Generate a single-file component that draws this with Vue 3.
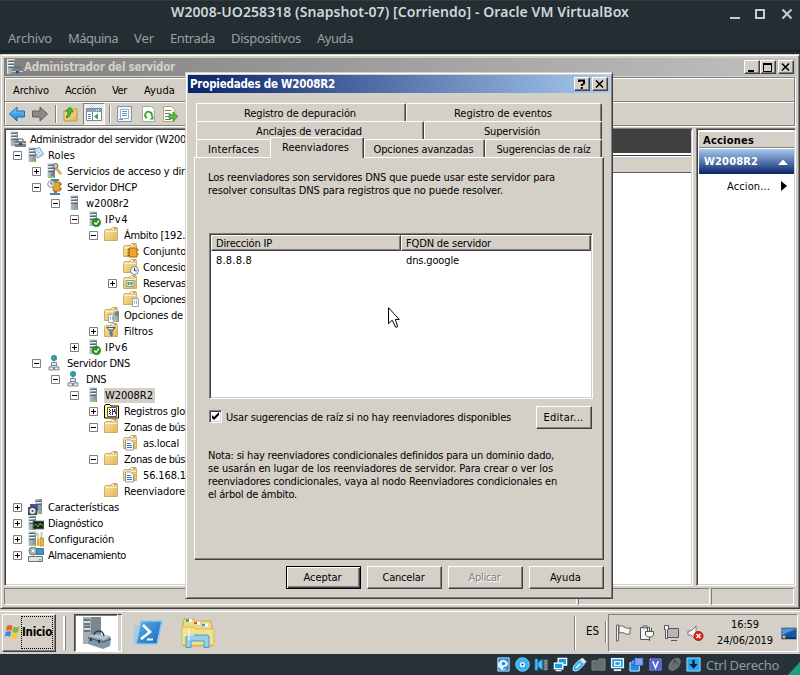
<script setup>
const vFit = {
  mounted(el, { value }) {
    if (!value) return
    const natural = el.getBoundingClientRect().width
    const count = el.textContent.length
    el.style.letterSpacing = (value - natural) / count + 'px'
  },
}

const hostMenu = [
  ['Archivo', 44], ['Máquina', 50], ['Ver', 20], ['Entrada', 45], ['Dispositivos', 70], ['Ayuda', 36],
]
const guestMenu = [['Archivo', 36], ['Acción', 31], ['Ver', 15], ['Ayuda', 31]]

const tree = [
  { l: -1, t: 'Administrador del servidor (W200', w: 156, i: ['serverl', 'case'] },
  { l: 0, e: '-', t: 'Roles', w: 27, i: ['serverl', 'pages'] },
  { l: 1, e: '+', t: 'Servicios de acceso y dir', w: 118, i: ['serverl', 'keys'] },
  { l: 1, e: '-', t: 'Servidor DHCP', w: 70, i: ['dhcp'] },
  { l: 2, e: '-', t: 'w2008r2', w: 43, i: ['server'] },
  { l: 3, e: '-', t: 'IPv4', w: 23, i: ['server', 'check'] },
  { l: 4, e: '-', t: 'Ámbito [192.', w: 61, i: ['folder'] },
  { l: 5, t: 'Conjunto', w: 43, i: ['folder', 'book'] },
  { l: 5, t: 'Concesio', w: 43, i: ['folder', 'clock'] },
  { l: 5, e: '+', t: 'Reservas', w: 43, i: ['folder', 'card'] },
  { l: 5, t: 'Opciones', w: 43, i: ['folder', 'sheet'] },
  { l: 4, t: 'Opciones de', w: 59, i: ['folder', 'serveropts'] },
  { l: 4, e: '+', t: 'Filtros', w: 29, i: ['folder', 'funnel'] },
  { l: 3, e: '+', t: 'IPv6', w: 23, i: ['server', 'check'] },
  { l: 1, e: '-', t: 'Servidor DNS', w: 63, i: ['dns'] },
  { l: 2, e: '-', t: 'DNS', w: 20, i: ['dns'] },
  { l: 3, e: '-', t: 'W2008R2', w: 48, i: ['server'], sel: true },
  { l: 4, e: '+', t: 'Registros glo', w: 61, i: ['log'] },
  { l: 4, e: '-', t: 'Zonas de bús', w: 61, i: ['folder'] },
  { l: 5, t: 'as.local', w: 36, i: ['folder', 'doc'] },
  { l: 4, e: '-', t: 'Zonas de bús', w: 61, i: ['folder'] },
  { l: 5, t: '56.168.1', w: 43, i: ['folder', 'doc'] },
  { l: 4, t: 'Reenviadore', w: 61, i: ['folder'] },
  { l: 0, e: '+', t: 'Características', w: 71, i: ['tower', 'disk'] },
  { l: 0, e: '+', t: 'Diagnóstico', w: 55, i: ['serverl', 'scope'] },
  { l: 0, e: '+', t: 'Configuración', w: 66, i: ['serverl', 'tools'] },
  { l: 0, e: '+', t: 'Almacenamiento', w: 78, i: ['storage'] },
]

const intro = [
  ['Los reenviadores son servidores DNS que puede usar este servidor para', 347],
  ['resolver consultas DNS para registros que no puede resolver.', 295],
]
const note = [
  ['Nota: si hay reenviadores condicionales definidos para un dominio dado,', 346],
  ['se usarán en lugar de los reenviadores de servidor. Para crear o ver los', 345],
  ['reenviadores condicionales, vaya al nodo Reenviadores condicionales en', 349],
  ['el árbol de ámbito.', 89],
]
const buttons = [
  { t: 'Aceptar', w: 38, k: 'default' },
  { t: 'Cancelar', w: 42, k: '' },
  { t: 'Aplicar', w: 32, k: 'disabled' },
  { t: 'Ayuda', w: 31, k: '' },
]
const hostIcons = ['hdd', 'cd', 'audio', 'net', 'usb', 'shared', 'display', 'record', 'cpu', 'mouse', 'kbd']
</script>

<template>
  <div class="screen">
    <svg class="defs" width="0" height="0">
      <defs>
        <linearGradient id="gfold" x1="0" y1="0" x2="1" y2="1"><stop offset="0" stop-color="#fbe6a4" /><stop offset="1" stop-color="#e2b458" /></linearGradient>
        <linearGradient id="gsrv" x1="0" y1="0" x2="1" y2="0"><stop offset="0" stop-color="#bcc6cc" /><stop offset="1" stop-color="#7f8c94" /></linearGradient>
        <linearGradient id="gblue" x1="0" y1="0" x2="0" y2="1"><stop offset="0" stop-color="#7fd0fa" /><stop offset="1" stop-color="#1583d2" /></linearGradient>
        <linearGradient id="gps" x1="0" y1="0" x2="1" y2="1"><stop offset="0" stop-color="#55b5ea" /><stop offset="1" stop-color="#1c63bb" /></linearGradient>
      </defs>
      <symbol id="i-server" viewBox="0 0 16 16">
        <path d="M4 0h8v15H4z" fill="url(#gsrv)" /><path d="M4 .5h8M4.500 0v15" stroke="#dfe6ea" fill="none" />
        <path d="M5 2.500h6M5 5.500h6M5 8.500h6" stroke="#5d6b74" /><path d="M5 3.500h6M5 6.500h6" stroke="#eef2f4" />
        <path d="M9 13h2v2H9z" fill="#62e42c" />
      </symbol>
      <symbol id="i-serverl" viewBox="0 0 16 16">
        <path d="M0 0h8v15H0z" fill="url(#gsrv)" /><path d="M0 .5h8M.5 0v15" stroke="#dfe6ea" fill="none" />
        <path d="M1 2.500h6M1 5.500h6M1 8.500h6" stroke="#5d6b74" /><path d="M1 3.500h6M1 6.500h6" stroke="#eef2f4" />
        <path d="M5 13h2v2H5z" fill="#62e42c" />
      </symbol>
      <symbol id="i-tower" viewBox="0 0 16 16">
        <path d="M7 0h7v15H7z" fill="url(#gsrv)" /><path d="M7.500 2.500h6M7.500 5.500h6" stroke="#52616a" /><path d="M7.500 3.500h6" stroke="#eef2f4" /><path d="M11 12h2v2h-2z" fill="#62e42c" />
      </symbol>
      <symbol id="i-case" viewBox="0 0 16 16">
        <path d="M5 10h11v6H5z" fill="#74838e" /><path d="M8 10V8h5v2" fill="none" stroke="#53606a" /><path d="M5 12.500h11" stroke="#c3ccd2" /><path d="M9 12h3v2H9z" fill="#3b4750" />
      </symbol>
      <symbol id="i-pages" viewBox="0 0 16 16">
        <path d="M6.500 2.500l5-2 4 7-6 3.500z" fill="#e9f3fb" stroke="#5f8fbb" stroke-width=".9" /><path d="M8.500 4.500l3-1.500M9.500 6.500l3-1.500M10.500 8.500l3-1.500" stroke="#7fa8cc" stroke-width=".8" />
      </symbol>
      <symbol id="i-keys" viewBox="0 0 16 16">
        <circle cx="8.500" cy="3" r="2.400" fill="#c8c8c8" stroke="#666" /><path d="M8 5l-3 8" stroke="#777" stroke-width="2" /><path d="M9 5l5 6" stroke="#c98d1c" stroke-width="2.400" /><path d="M9.500 5.500l4 5" stroke="#f6d16a" />
      </symbol>
      <symbol id="i-dhcp" viewBox="0 0 16 16">
        <path d="M4 0h8v2H4zM3 14h10v2H3z" fill="#4f7fa8" /><path d="M7 1h3v14H7z" fill="#657f92" />
        <path d="M6 3h7v9H6z" fill="#eda42b" stroke="#9c6412" stroke-width=".8" /><path d="M13 4h1.500v2H13zM13 9h1.500v2H13z" fill="#b3541a" />
        <circle cx="4" cy="5" r="3.300" fill="#eef4f8" stroke="#8a979f" /><path d="M4 3v2h2" fill="none" stroke="#334" stroke-width=".8" />
      </symbol>
      <symbol id="i-check" viewBox="0 0 16 16">
        <circle cx="11.500" cy="11.500" r="4.200" fill="#2c9a22" stroke="#16640f" stroke-width=".6" /><path d="M9.300 11.500l1.700 1.800 3-3.600" stroke="#fff" stroke-width="1.300" fill="none" />
      </symbol>
      <symbol id="i-folder" viewBox="0 0 16 16">
        <path d="M.5 3.500L1.500 2.500H7V1.500l1-1h5l.5 2v11H.5z" fill="url(#gfold)" stroke="#cda75a" stroke-width=".9" /><path d="M8 1.500h4" stroke="#fff" /><path d="M1 4.500h12" stroke="#fff6d0" stroke-width=".8" /><path d="M10 1h2v1h-2z" fill="#5ba3dc" />
      </symbol>
      <symbol id="i-book" viewBox="0 0 16 16">
        <path d="M6 5h8v9H6z" fill="#f0a42c" stroke="#a36612" /><path d="M4.500 7h2M4.500 10h2M4.500 12.500h2" stroke="#744a0e" /><path d="M14.500 6h1v2h-1z" fill="#cf4a22" /><path d="M14.500 10h1v2h-1z" fill="#4a9a38" />
      </symbol>
      <symbol id="i-clock" viewBox="0 0 16 16">
        <circle cx="11.500" cy="11.500" r="4" fill="#eef4f8" stroke="#7d8a94" /><path d="M11.500 9v2.700h2.300" fill="none" stroke="#33414d" />
      </symbol>
      <symbol id="i-card" viewBox="0 0 16 16"><path d="M3 5.500h8v6H3z" fill="#dcecf0" stroke="#7b8a8f" stroke-width=".8" /><path d="M4.500 7h2v3h-2zM7.500 7h2v3h-2z" fill="#4a9c54" /></symbol>
      <symbol id="i-sheet" viewBox="0 0 16 16"><path d="M9.500 7.500h6v8h-6z" fill="#fff" stroke="#8391a3" stroke-width=".8" /><path d="M11 10h1M13 10h1M11 12h1M13 12h1" stroke="#3d6fb0" /></symbol>
      <symbol id="i-serveropts" viewBox="0 0 16 16"><path d="M10 4h5v11h-5z" fill="url(#gsrv)" /><path d="M10.500 6h4M10.500 8h4" stroke="#56636c" /><path d="M12 12h2v2h-2z" fill="#62e42c" /><path d="M4.500 7.500h5v8h-5z" fill="#fff" stroke="#8391a3" stroke-width=".8" /><path d="M6 10h1M8 10h1M6 12h1M8 12h1" stroke="#3d6fb0" /></symbol>
      <symbol id="i-funnel" viewBox="0 0 16 16"><path d="M2.500 4.500h9L8 8v5L6 11.500V8z" fill="#79a0b8" stroke="#3e5a6c" stroke-width=".9" /><path d="M4 5.500h5" stroke="#d8edf8" /></symbol>
      <symbol id="i-dns" viewBox="0 0 16 16">
        <circle cx="7" cy="3" r="3" fill="#2b87cf" /><path d="M5 1l3 1-1 2-2 1zM8 4l1.500-1L9 5z" fill="#46b54b" />
        <path d="M7 6v5M4 12V10.500h6V12" stroke="#8c979e" fill="none" /><path d="M4.500 7.500h5v3h-5zM2 12h4.500v3H2zM7.500 12H12v3H7.500z" fill="#e2e7ea" stroke="#74818a" stroke-width=".9" />
      </symbol>
      <symbol id="i-log" viewBox="0 0 16 16"><path d="M.5 3l1-1.500h4L7 3h7.500v12H.5z" fill="#ffff78" stroke="#000" /><path d="M3.500 4.500h9v9h-9z" fill="#fff" stroke="#555" /><path d="M5 6h1v1H5zM6 7h1v1H6zM5 8h1v1H5zM6 9h1v1H6zM5 10h1v1H5zM6 11h1v1H6z" fill="#111" /><path d="M8.500 6v6M9 8.500h2.500V11" stroke="#2333b8" fill="none" /><path d="M10 6h1.500v2H10z" fill="#d22" /></symbol>
      <symbol id="i-doc" viewBox="0 0 16 16"><path d="M2.500 5h5l3 2.500V15h-8z" fill="#fff" stroke="#76899d" stroke-width=".8" /><path d="M4 8.500h4M4 10.500h5M4 12.500h5" stroke="#2e79c4" /></symbol>
      <symbol id="i-disk" viewBox="0 0 16 16"><path d="M2 5h8v7H2z" fill="#4a4f9c" /><path d="M0 8h9v8H0z" fill="#444f57" /><circle cx="4.500" cy="12" r="3" fill="#e5e9ec" /><circle cx="4.500" cy="12" r="1" fill="#444" /></symbol>
      <symbol id="i-scope" viewBox="0 0 16 16"><path d="M5 6h11v8H5z" fill="#1c2320" stroke="#6d7880" stroke-width=".8" /><path d="M6 11l2-2 2 3 2-4 1 2h2" stroke="#5edc3f" fill="none" stroke-width=".8" /></symbol>
      <symbol id="i-tools" viewBox="0 0 16 16"><path d="M7 1l3 3v11" stroke="#e4a62b" stroke-width="2.200" fill="none" /><path d="M7 .5l3 3v5" stroke="#c9d0d4" stroke-width="2" fill="none" /><path d="M13.500 1v7" stroke="#bfc8cd" stroke-width="2" /><path d="M12 7h3.500v8H12z" fill="#f0b32f" stroke="#a87310" stroke-width=".6" /></symbol>
      <symbol id="i-storage" viewBox="0 0 16 16"><circle cx="5" cy="4" r="4" fill="#a9b4bb" stroke="#69757d" /><circle cx="5" cy="4" r="1.200" fill="#fff" /><path d="M8.500 1.500h7v6h-7z" fill="#2d9be0" stroke="#596a75" /><path d="M.5 9.500h14v5H.5z" fill="#dfe4e7" stroke="#68747c" /><path d="M11 12h2v1.500h-2z" fill="#3fcf2f" /></symbol>

      <symbol id="h-hdd" viewBox="0 0 16 16"><path d="M2 1h12v14H2z" fill="#1583d6" stroke="#d9efff" /><path d="M11 12a5 5 0 1 1 1-6q1 4-3 4l-4 4" fill="#d8f2ff" stroke="#e8f8ff" /><circle cx="8" cy="7" r="1.800" fill="#1583d6" /></symbol>
      <symbol id="h-cd" viewBox="0 0 16 16"><circle cx="8" cy="8" r="7.200" fill="#34b6f4" stroke="#7fd8ff" /><circle cx="8" cy="8" r="2.800" fill="#e9f8ff" /><circle cx="8" cy="8" r="1" fill="#116" /></symbol>
      <symbol id="h-audio" viewBox="0 0 16 16"><path d="M1 2h3v12H1zM4 6l5-4v12L4 10z" fill="#4cbcf7" stroke="#1173b8" stroke-width=".7" /><path d="M10 3h5v11h-5z" fill="#56646c" /><path d="M12.500 3v11" stroke="#8d999f" stroke-width="3" stroke-dasharray="2 1" /></symbol>
      <symbol id="h-net" viewBox="0 0 16 16"><path d="M5.500 1.500h9v7h-9z" fill="#169bf0" stroke="#fff" stroke-width="1.400" /><path d="M1.500 6.500h9v6h-9z" fill="#169bf0" stroke="#fff" stroke-width="1.400" /><path d="M3 14.500h6" stroke="#e3eef5" stroke-width="1.500" /></symbol>
      <symbol id="h-usb" viewBox="0 0 16 16"><path d="M11 1l4 4-2 2-4-4z" fill="#d2eefe" stroke="#eef" /><path d="M8 3l5 5-6 6q-4 2-6 0 0-4 2-6z" fill="#41aef0" stroke="#c5eaff" /><path d="M4 12l5-5" stroke="#eaf8ff" stroke-width="1.500" /></symbol>
      <symbol id="h-shared" viewBox="0 0 16 16"><path d="M1 4h6l1.500-2H15v12H1z" fill="#686d6f" stroke="#7b8081" /></symbol>
      <symbol id="h-display" viewBox="0 0 16 16"><path d="M1 1h14v11H1z" fill="#e9f8ff" /><path d="M2.500 2.500h11v8h-11z" fill="#1795e7" /><path d="M5 5h6v4H5z" fill="none" stroke="#fff" stroke-width="1.300" /><path d="M4 14h8" stroke="#eaf6fc" stroke-width="2" /></symbol>
      <symbol id="h-record" viewBox="0 0 16 16"><path d="M1 6h10v9H1z" fill="#1792ea" stroke="#dcefff" /><path d="M6 1h9v8H6zM3 3l3 1v3L3 8z" fill="#7ea6f1" stroke="#264fae" stroke-width=".7" /></symbol>
      <symbol id="h-cpu" viewBox="0 0 16 16"><path d="M2 2h12v12H2z" fill="#3e51c5" stroke="#8c98ff" stroke-width="2" stroke-dasharray="1 1" /><path d="M3 3h10v10H3z" fill="#4e63d5" /><path d="M5 4.500l3 7 3-7" fill="none" stroke="#fff" stroke-width="1.700" /></symbol>
      <symbol id="h-mouse" viewBox="0 0 16 16"><path d="M2 12q0-7 6-10 5-2 6 2 0 6-5 9-5 3-7-1z" fill="#696e70" stroke="#7e8385" /><path d="M7 3l5 5M9 2l-2 5" stroke="#3a4145" /></symbol>
      <symbol id="h-kbd" viewBox="0 0 16 16"><path d="M1 1h14v14H1z" fill="#28a6f0" stroke="#a9e0ff" /><path d="M8 3v7" stroke="#07243a" stroke-width="2.600" /><path d="M3.500 7.500h9L8 12.500z" fill="#07243a" /></symbol>
    </svg>

    <header class="host-title">
      <span class="host-name" v-fit="458">W2008-UO258318 (Snapshot-07) [Corriendo] - Oracle VM VirtualBox</span>
      <svg class="host-ctl" width="70" height="16" viewBox="0 0 70 16">
        <path d="M2 12h10v2H2z" fill="#c5cdd0" /><path d="M28 5h8v8h-8z" fill="none" stroke="#c5cdd0" stroke-width="2" /><path d="M54.500 4.500l9 9M63.500 4.500l-9 9" stroke="#c5cdd0" stroke-width="2" />
      </svg>
    </header>
    <nav class="host-menu"><span v-for="m in hostMenu" :key="m[0]" class="t" v-fit="m[1]">{{ m[0] }}</span></nav>

    <section class="manager">
      <div class="m-title">
        <svg class="m-icon" width="16" height="16"><use href="#i-serverl" width="16" height="16" /><use href="#i-case" width="16" height="16" /></svg>
        <b class="t" v-fit="151">Administrador del servidor</b>
        <div class="winbtns">
          <i class="wb"><svg width="12" height="10"><path d="M2 8h6v2H2z" /></svg></i>
          <i class="wb"><svg width="12" height="10"><path d="M1.500 1.500h8v8h-8z" fill="none" stroke="#000" /><path d="M1 1h9v2H1z" /></svg></i>
          <i class="wb gap"><svg width="12" height="10"><path d="M2 1.500l7 7M9 1.500l-7 7" stroke="#000" stroke-width="1.600" /></svg></i>
        </div>
      </div>
      <div class="m-bars">
        <div class="m-menu"><span v-for="m in guestMenu" :key="m[0]" class="t" v-fit="m[1]">{{ m[0] }}</span></div>
        <div class="m-tools">
          <svg class="back" width="16" height="16"><path d="M.5 8L8 1v4h7.500v6H8v4z" fill="url(#gblue)" stroke="#1c6cae" /></svg>
          <svg class="fwd" width="16" height="16"><path d="M15.500 8L8 1v4H.5v6H8v4z" fill="#8b8b8b" stroke="#5f5f5f" /></svg>
          <i class="sep" />
          <svg class="up" width="16" height="16"><path d="M1 5h6l1-2h6v12H1z" fill="url(#gfold)" stroke="#c19a45" /><path d="M4 12q4-2 4-6h2.500L7 1 2.500 5H5q0 4-2 6z" fill="#52b52e" stroke="#287a16" stroke-width=".7" /></svg>
          <div class="pressed"><svg width="16" height="16"><path d="M.5 2.500h15v12H.5z" fill="#fff" stroke="#7b8794" /><path d="M1 3h14v3H1z" fill="#8ba0b8" /><path d="M10 4h1M12 4h1" stroke="#fff" /><path d="M6.500 6v8" stroke="#7b8794" /><path d="M2 8.500h3M2 10.500h3M2 12.500h3" stroke="#4b90ca" /><path d="M12 7.500v6l-4-3z" fill="#39a52a" /></svg></div>
          <i class="sep s2" />
          <svg class="props" width="16" height="16"><path d="M.5.5h14v15H.5z" fill="#edf4fa" stroke="#8794a3" /><path d="M3.500 3.500h8v9h-8z" fill="#fff" stroke="#9fb1c3" /><path d="M5 5.500h5M5 7.500h5M5 9.500h5M2 13.500h4" stroke="#5797cd" /></svg>
          <svg class="refresh" width="16" height="16"><path d="M.5.500h9l3 3v12H.5z" fill="#fff" stroke="#a8a8a8" /><path d="M5 12a3.300 3.300 0 1 1 4.500-1.500" fill="none" stroke="#35a32a" stroke-width="1.800" /><path d="M11.500 9.500v4H7.500z" fill="#35a32a" /></svg>
          <svg class="export" width="18" height="16"><path d="M1.500.5h8l3 3v12h-11z" fill="#fffdf0" stroke="#b5a76f" /><path d="M3 4.500h6M3 7.500h5M3 10.500h5M3 13.500h6" stroke="#6b7a86" /><path d="M7 8.500h4V6l5 4.500-5 4.500v-2.500H7z" fill="#58bd3b" stroke="#2f8a1c" stroke-width=".7" /></svg>
        </div>
      </div>
      <div class="panes">
        <div class="tree sunk">
          <div v-for="(r, n) in tree" :key="n" class="node" :class="'lv' + (r.l + 1)">
            <span class="exp"><svg v-if="r.e" width="9" height="9"><path d="M.5.500h8v8h-8z" fill="#fff" stroke="#808080" /><path :d="r.e === '+' ? 'M2 4.500h5M4.500 2v5' : 'M2 4.500h5'" stroke="#000" /></svg></span>
            <svg class="ico" width="16" height="16"><use v-for="s in r.i" :key="s" :href="'#i-' + s" width="16" height="16" /></svg>
            <span class="label" :class="{ sel: r.sel }"><span class="t" v-fit="r.w">{{ r.t }}</span></span>
          </div>
        </div>
        <div class="center sunk"><div class="c-head" /><div class="c-cols" /></div>
        <div class="actions sunk">
          <div class="a-head"><b class="t" v-fit="51">Acciones</b></div>
          <div class="a-group"><b class="t" v-fit="54">W2008R2</b><svg width="10" height="6"><path d="M0 6l5-5.500L10 6z" fill="#fff" /></svg></div>
          <div class="a-item"><span class="t" v-fit="43">Accion...</span><svg width="6" height="10"><path d="M0 0l6 5-6 5z" /></svg></div>
        </div>
      </div>
      <div class="status"><i class="st1" /><i class="st2" /><i class="st3" /></div>
    </section>

    <footer class="taskbar">
      <div class="start">
        <svg width="17" height="16" viewBox="0 0 17 16"><path d="M3 2q3-2 5.500 0L7.500 7q-3-2-5.500 0z" fill="#e8622c" /><path d="M9.500 2.500q3 2 6 0L14 8q-3 2-5.500 0z" fill="#7fbb2e" /><path d="M1.800 8q3-2 5.500 0L6 13q-3-2-5.500 0z" fill="#3f8fd8" /><path d="M8.200 9q3 2 5.600 0l-1.300 5q-3 2-5.600 0z" fill="#f8ca32" /></svg>
        <span class="dotted"><b class="t" v-fit="30">Inicio</b></span>
      </div>
      <i class="tsep a" />
      <div class="task-on">
        <svg width="32" height="32" viewBox="0 0 32 32"><path d="M2 0h8v27H2z" fill="#a4afb4" /><path d="M10 0h10v27H10z" fill="#7b878d" /><path d="M3 3h6M3 7h6M3 10h6M3 14h6" stroke="#54636c" stroke-width="1.500" /><path d="M3 5h6M3 12h6" stroke="#e2e8ea" stroke-width="1.500" /><path d="M7 19l5-2 17 2 1 3-1 7-7 3-15-5z" fill="#7e95a5" /><path d="M7 19l6-2 17 2-7 4z" fill="#b2c3ce" /><path d="M13 18q1-4 5-4t5 5" fill="none" stroke="#35424b" stroke-width="1.500" /><path d="M7 21l15 4 8-3" fill="none" stroke="#455762" /><path d="M10 21v3M18 23v3" stroke="#2d3940" stroke-width="2" /></svg>
      </div>
      <i class="edge" />
      <svg class="ps" width="32" height="26" viewBox="0 0 32 26"><path d="M1 5h6L3 23H0z" fill="#8ccbed" opacity=".6" /><path d="M8 1h21L24 24H3z" fill="url(#gps)" stroke="#8ac9ee" stroke-width="1.500" stroke-linejoin="round" /><path d="M10 5l7 7-9 7" fill="none" stroke="#fff" stroke-width="2.600" /><path d="M14 19.500h6" stroke="#fff" stroke-width="2" /></svg>
      <svg class="ex" width="34" height="32" viewBox="0 0 34 32"><path d="M2 5l1-4h10l2 2h15l1 5v20H2z" fill="#eed886" stroke="#c8a648" /><path d="M5 2.500h6M13 5h6M21 7h6" stroke="#fff" stroke-width="3" /><path d="M5 2.500h3" stroke="#20a83a" stroke-width="2.500" /><path d="M13 5h3" stroke="#e4522c" stroke-width="2.500" /><path d="M21 7h3" stroke="#3a9be0" stroke-width="2.500" /><path d="M1 9h11l2 2h19v16H1z" fill="#f3e08f" stroke="#d8bc5c" /><path d="M5 29.500V19q0-2 2-2h19q2 0 2 2v10.500h-5V23H10v6.500z" fill="#95cfea" stroke="#4c9cc6" /><path d="M8 12v10M3 17h10" stroke="#fff" /></svg>
      <i class="tsep b" />
      <span class="lang"><span class="t" v-fit="13">ES</span></span>
      <i class="tsep c" />
      <div class="tray">
        <svg class="ti" width="17" height="18" fill="#f6f6f6" stroke="#666"><path d="M1.500 1h2v16h-2z" /><path d="M4 2q3-1 5 1 3 2 7 1-2 2-1 6-4 1-6-1-2-1-5 0z" /></svg>
        <svg class="ti" width="17" height="18" fill="#f6f6f6" stroke="#555"><path d="M1.500 3.500h9v12h-9z" /><path d="M4 2h4v2H4zM6.500 7.500h8V11l-2 2h-4l-2-2zM8.500 4v3M12.500 4v3M10.500 13v4" /></svg>
        <svg class="ti" width="17" height="18" fill="#f6f6f6" stroke="#555"><path d="M4.500 4.500h11v9h-11z" fill="#b6b6b6" /><path d="M1.500 1.500h4v4h-1v9h-2v-9h-1zM8 16.500h6" /></svg>
        <svg class="ti" width="18" height="18" fill="#f6f6f6" stroke="#777"><path d="M1 7h3l5-5v14l-5-5H1z" /><circle cx="11.500" cy="12" r="4.500" fill="#e1251f" stroke="#b81410" /><path d="M9.500 10l4 4M13.500 10l-4 4" stroke="#fff" stroke-width="1.500" /></svg>
        <div class="clock"><span class="t" v-fit="28">16:59</span><span class="t" v-fit="56">24/06/2019</span></div>
        <svg class="desk" width="16" height="14"><path d="M.5 1h15v11H.5z" fill="#1a55a8" stroke="#6f8297" /><path d="M1 2h14L1 8z" fill="#4a95dc" /><path d="M1 10h14v2H1z" fill="#123566" /><circle cx="3" cy="10" r="1.500" fill="#f3c331" /></svg>
      </div>
    </footer>

    <div class="host-status">
      <svg v-for="h in hostIcons" :key="h" width="15" height="15"><use :href="'#h-' + h" width="15" height="15" /></svg>
      <span class="t" v-fit="73">Ctrl Derecho</span>
      <svg class="grip" width="12" height="13"><path d="M12 0v13H0z" fill="#16a085" /></svg>
    </div>

    <section class="dialog">
      <div class="d-title">
        <b class="t" v-fit="145">Propiedades de W2008R2</b>
        <div class="winbtns">
          <i class="wb"><svg width="12" height="10"><path d="M3 3V1.500h5V4.500L5.800 6v1M5.800 8v2" fill="none" stroke="#000" stroke-width="1.900" /></svg></i>
          <i class="wb gap"><svg width="12" height="10"><path d="M2 1.500l7 7M9 1.500l-7 7" stroke="#000" stroke-width="1.600" /></svg></i>
        </div>
      </div>
      <div class="tabs r1"><div class="tab"><span class="t" v-fit="112">Registro de depuración</span></div><div class="tab"><span class="t" v-fit="98">Registro de eventos</span></div></div>
      <div class="tabs r2"><div class="tab"><span class="t" v-fit="106">Anclajes de veracidad</span></div><div class="tab"><span class="t" v-fit="56">Supervisión</span></div></div>
      <div class="tabs r3">
        <div class="tab"><span class="t" v-fit="51">Interfaces</span></div>
        <div class="tab on"><span class="t" v-fit="67">Reenviadores</span></div>
        <div class="tab"><span class="t" v-fit="100">Opciones avanzadas</span></div>
        <div class="tab last"><span class="t" v-fit="94">Sugerencias de raíz</span></div>
      </div>
      <div class="page">
        <p class="intro"><span v-for="l in intro" :key="l[0]" class="t" v-fit="l[1]">{{ l[0] }}</span></p>
        <div class="list sunk">
          <div class="cols"><div><span class="t" v-fit="56">Dirección IP</span></div><div><span class="t" v-fit="85">FQDN de servidor</span></div></div>
          <div class="row"><div><span class="t" v-fit="36">8.8.8.8</span></div><div><span class="t" v-fit="53">dns.google</span></div></div>
        </div>
        <div class="opt">
          <i class="cb sunk"><svg width="9" height="9"><path d="M1 3v3l2 2 5-5V0L3 5z" /></svg></i>
          <span class="t" v-fit="285">Usar sugerencias de raíz si no hay reenviadores disponibles</span>
          <div class="btn edit"><span class="t" v-fit="40">Editar...</span></div>
        </div>
        <p class="note"><span v-for="l in note" :key="l[0]" class="t" v-fit="l[1]">{{ l[0] }}</span></p>
      </div>
      <div class="btns"><div v-for="b in buttons" :key="b.t" class="btn" :class="b.k"><span class="t" v-fit="b.w">{{ b.t }}</span></div></div>
    </section>

    <svg class="cursor" width="13" height="22"><path d="M.5.700v16l3.700-3.500 3.300 6.800q2 1 2-1L7.300 12.500h4z" fill="#fff" stroke="#000" /></svg>
  </div>
</template>

<style>
body { margin: 0; overflow: hidden; }
</style>

<style scoped>
* { box-sizing: border-box; }
.screen { position: relative; width: 800px; height: 675px; overflow: hidden; display: flex; flex-direction: column; background: #232d32; font: 11px/13px "DejaVu Sans Condensed", "DejaVu Sans", sans-serif; font-stretch: condensed; color: #000; }
.defs { position: absolute; }
svg { display: block; flex: none; }
p { margin: 0; }
i { font-style: normal; }
.t { display: block; flex: none; width: max-content; white-space: nowrap; }
.host-title { flex: none; height: 26px; display: flex; align-items: center; padding: 0 0 2px 171px; border-top: 1px solid #303b40; font: 600 14px/22px "Noto Sans", sans-serif; color: #ced6d9; }
.host-name { display: block; flex: none; width: max-content; white-space: nowrap; margin-top: -2px; }
.host-ctl { margin-left: auto; margin-right: 2px; }
.host-menu { flex: none; height: 28px; padding: 1px 8px 0; display: flex; gap: 16px; font: 13px/23px "Noto Sans", sans-serif; color: #98a1a4; background: linear-gradient(#232d32 24px, #182125 24px, #182125 26px, #232d32 26px); }
.manager { flex: none; height: 555px; background: #d4d0c8; border: 1px solid; border-color: #d4d0c8 #404040 #404040 #d4d0c8; box-shadow: inset 1px 1px #fff, inset -1px -1px #808080; padding: 3px; display: flex; flex-direction: column; }
.m-title { flex: none; height: 18px; display: flex; align-items: center; background: linear-gradient(90deg, #808080, #c0c0c0); color: #d4d0c8; padding: 0 2px; font-size: 11.500px; }
.m-icon { margin: 0 1px; }
.winbtns { margin-left: auto; display: flex; }
.wb { width: 16px; height: 14px; background: #d4d0c8; border: 1px solid; border-color: #fff #404040 #404040 #fff; box-shadow: inset -1px -1px #808080; display: flex; padding: 1px; }
.wb.gap { margin-left: 2px; }
.m-bars { flex: none; height: 49px; margin: 1px 1px 0 0; border: 1px solid #808080; box-shadow: inset 1px 1px #fff, 1px 1px #fff; }
.m-menu { height: 24px; border-bottom: 1px solid #808080; display: flex; gap: 16px; align-items: center; padding: 1px 0 0 8px; }
.m-menu .t:nth-child(4) { margin-left: 1px; }
.m-tools { height: 23px; display: flex; align-items: center; padding-left: 4px; border-top: 1px solid #fff; }
.fwd { margin-left: 7px; }
.sep { width: 2px; height: 18px; background: #808080; border-right: 1px solid #fff; margin: 0 6px 0 7px; }
.pressed { width: 22px; height: 22px; margin-left: 4px; border: 1px solid; border-color: #808080 #fff #fff #808080; background: repeating-conic-gradient(#fff 0 25%, #dedbd5 0 50%) 0 0 / 2px 2px; padding: 2px; }
.sep.s2 { margin: 0 6px 0 4px; }
.refresh { margin-left: 9px; }
.export { margin-left: 4px; }
.panes { flex: none; height: 458px; margin-top: 2px; display: flex; }
.sunk { border: 1px solid; border-color: #808080 #fff #fff #808080; box-shadow: inset 1px 1px #404040, inset -1px -1px #d4d0c8; background: #fff; }
.tree { width: 196px; overflow: hidden; padding: 2px 1px 1px; }
.node { height: 16px; display: flex; align-items: center; }
.exp { flex: none; width: 9px; height: 9px; margin: 0 6px 0 7px; }
.ico { margin-right: 4px; }
.label { flex: none; height: 15px; padding: 1px 1px 1px 0; }
.label.sel { background: #d4d0c8; padding: 1px 2px 1px 1px; margin-left: -1px; }
.lv0 .exp { width: 0; margin: 0 0 0 4px; }
.lv2 { padding-left: 19px; }
.lv3 { padding-left: 38px; }
.lv4 { padding-left: 57px; }
.lv5 { padding-left: 76px; }
.lv6 { padding-left: 95px; }
.center { width: 490px; margin-left: 3px; padding: 1px; }
.c-head { height: 23px; background: #404040; }
.c-cols { height: 20px; background: #d4d0c8; border-top: 2px solid #fff; border-bottom: 1px solid #606060; box-shadow: inset 0 1px #404040, inset 0 2px #fff; }
.actions { width: 100px; margin-left: 3px; padding: 2px 1px 1px 2px; }
.a-head { height: 17px; background: #d4d0c8; border-bottom: 1px solid #808080; padding: 2px 0 0 4px; border-top: 1px solid #fff; }
.a-group { height: 25px; margin-top: 1px; background: linear-gradient(#a6caf0, #0a246a); color: #fff; display: flex; align-items: center; justify-content: space-between; padding: 0 6px 0 5px; }
.a-item { height: 24px; display: flex; align-items: center; justify-content: flex-end; gap: 11px; padding-right: 7px; }
.status { height: 18px; margin-top: 2px; display: flex; }
.status i { border: 1px solid; border-color: #808080 #fff #fff #808080; }
.st1 { width: 573px; }
.st2 { width: 132px; margin-left: 1px; }
.st3 { width: 83px; margin-left: 1px; }
.taskbar { flex: none; height: 45px; background: #d4d0c8; display: flex; align-items: center; box-shadow: inset 0 2px #d4d0c8, inset 0 3px #fff; padding: 2px 0 0 2px; }
.start { width: 54px; height: 38px; border: 1px solid; border-color: #fff #404040 #404040 #fff; box-shadow: inset -1px -1px #808080; display: flex; align-items: center; padding: 1px 1px 2px; }
.start .t { font-size: 11.500px; margin-top: 1px; }
.dotted { height: 33px; width: 32px; border: 1px dotted #000; display: flex; align-items: center; }
.tsep { width: 3px; height: 34px; background: #fff; border-right: 1px solid #808080; }
.tsep.a { margin-left: 7px; }
.task-on { width: 44px; height: 38px; margin-left: 8px; border: 1px solid; border-color: #404040 #fff #fff #404040; box-shadow: inset 1px 1px #808080; background: #fff; padding: 2px 0 0 6px; }
.edge { width: 4px; height: 38px; border-top: 1px solid #404040; border-right: 1px solid #fff; border-bottom: 1px solid #fff; }
.ps { margin-left: 11px; }
.ex { margin-left: 16px; margin-top: 2px; }
.tsep.b { margin-left: 359px; width: 2px; border-right: 1px solid #fff; background: #808080; }
.lang { margin-left: 10px; margin-top: -2px; font-size: 11.500px; }
.tsep.c { margin-left: 6px; height: 22px; width: 2px; background: #808080; border-right: 1px solid #fff; margin-top: -2px; }
.tray { margin-left: auto; margin-right: 2px; width: 190px; height: 38px; border: 1px solid; border-color: #808080 #fff #fff #808080; display: flex; align-items: center; padding-left: 6px; gap: 7px; }
.clock { width: 58px; margin: 1px 0 0 4px; line-height: 16px; display: flex; flex-direction: column; align-items: center; }
.desk { margin-left: 0; margin-top: 2px; }
.host-status { height: 21px; background: #263238; display: flex; align-items: center; gap: 4px; padding: 0 0 0 496px; font: 13px/18px "Noto Sans", sans-serif; color: #919c9f; }
.host-status .t { margin-left: 1px; }
.grip { margin-left: auto; align-self: flex-end; }
.dialog { position: absolute; left: 185px; top: 72px; width: 428px; height: 527px; background: #d4d0c8; border: 1px solid; border-color: #d4d0c8 #404040 #404040 #d4d0c8; box-shadow: inset 1px 1px #fff, inset -1px -1px #808080; padding: 2px; }
.d-title { height: 18px; background: linear-gradient(90deg, #0a246a, #a6caf0); color: #fff; display: flex; align-items: center; padding: 0 2px; font-size: 11.500px; }
.tabs { display: flex; height: 18px; margin-left: 8px; width: 406px; }
.r1 { margin-top: 10px; }
.tab { height: 18px; display: flex; justify-content: center; align-items: center; padding: 1px 2px 0 0; border: 1px solid; border-color: #fff #404040 transparent #fff; border-bottom: 0; border-radius: 2px 2px 0 0; box-shadow: inset -1px 0 #808080; }
.tab.last { padding-right: 0; }
.r1 .tab:nth-child(1) { width: 210px; }
.r1 .tab:nth-child(2) { width: 196px; }
.r2 .tab:nth-child(1) { width: 228px; }
.r2 .tab:nth-child(2) { width: 178px; }
.r3 .tab:nth-child(1) { width: 74px; border-right: 0; box-shadow: none; padding-right: 0; }
.r3 .tab:nth-child(2) { width: 94px; }
.r3 .tab:nth-child(3) { width: 121px; }
.r3 .tab:nth-child(4) { width: 117px; }
.tab.on { height: 21px; margin-top: -2px; background: #d4d0c8; z-index: 1; padding: 0 3px 2px 0; }
.page { margin-left: 6px; width: 410px; height: 403px; border: 1px solid; border-color: #fff #404040 #404040 #fff; box-shadow: inset -1px -1px #808080; padding: 13px 10px 0 14px; }
.intro, .note { margin-left: -1px; }
.list { width: 384px; height: 166px; margin-top: 36px; padding: 1px; }
.cols { height: 16px; display: flex; }
.cols div { background: #d4d0c8; border: 1px solid; border-color: #fff #404040 #404040 #fff; box-shadow: inset -1px -1px #808080; padding: 1px 0 0 4px; width: 190px; }
.row { display: flex; padding-top: 3px; }
.row div { width: 190px; padding-left: 5px; }
.opt { height: 23px; margin-top: 7px; display: flex; align-items: center; }
.cb { width: 13px; height: 13px; padding: 1px; margin-right: 4px; margin-top: -2px; }
.btn { width: 75px; height: 23px; display: flex; align-items: center; justify-content: center; padding-right: 2px; border: 1px solid; border-color: #fff #404040 #404040 #fff; box-shadow: inset -1px -1px #808080; }
.edit { width: 56px; margin-left: auto; margin-right: 1px; padding-right: 1px; }
.btn.default { border-color: #000; box-shadow: inset 1px 1px #fff, inset -1px -1px #404040, inset -2px -2px #808080; }
.btn.disabled { color: #808080; text-shadow: 1px 1px #fff; }
.note { margin-top: 20px; }
.btns { display: flex; gap: 6px; margin: 6px 0 0 98px; }
.cursor { position: absolute; left: 388px; top: 307px; }
</style>
